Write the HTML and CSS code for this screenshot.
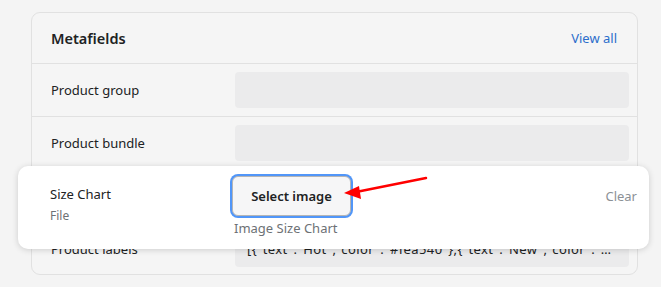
FILE: index.html
```html
<!DOCTYPE html>
<html lang="en">
<head>
    <meta charset="UTF-8">
    <title>Metafields</title>
    <link rel="stylesheet" href="styles.css">
</head>
<body>
    <main class="page">
        <section class="card">
            <header class="card-head">
                <h2>Metafields</h2>
                <a class="link" href="#">View all</a>
            </header>
            <div class="row">
                <span class="label">Product group</span>
                <div class="field"></div>
            </div>
            <div class="row">
                <span class="label">Product bundle</span>
                <div class="field"></div>
            </div>
            <!-- covered by the popup below -->
            <div class="row">
                <span class="label"></span>
                <div class="field"></div>
            </div>
            <div class="row last">
                <span class="label">Product labels</span>
                <div class="field">[{"text":"Hot","color":"#fea540"},{"text":"New","color":"#2c6ecb"}]</div>
            </div>
        </section>

        <!-- popup row over the card -->
        <div class="popup">
            <div class="popup-label">
                <span class="name">Size Chart</span>
                <span class="type">File</span>
            </div>
            <div class="popup-value">
                <button class="select">Select image</button>
                <span class="hint">Image Size Chart</span>
            </div>
            <a class="clear" href="#">Clear</a>
        </div>

        <svg class="arrow" width="100" height="30" viewBox="0 0 100 30">
            <line x1="86" y1="2" x2="16" y2="16" stroke="#f00" stroke-width="2.5" stroke-linecap="round"/>
            <polygon points="4,17 19,10 21,23" fill="#f00"/>
        </svg>
    </main>
</body>
</html>
```

FILE: styles.css
```css
* {
    margin: 0;
    padding: 0;
    box-sizing: border-box;
}

body {
    font-family: 'Noto Sans', 'Open Sans', sans-serif;
    font-size: 13px;
    color: #202223;
    background-color: #f4f4f4;
}

.page {
    position: relative;
    width: 661px;
    height: 287px;
    padding: 12px 23px 0 31px;
}

.card {
    border: 1px solid #e1e1e1;
    border-radius: 9px;
    background-color: #f5f5f5;
}

.card-head {
    display: flex;
    justify-content: space-between;
    align-items: center;
    height: 51px;
    padding: 0 20px 0 19px;
    border-bottom: 1px solid #e1e1e1;
}

.card-head h2 {
    font-size: 14.5px;
    font-weight: 600;
}

.link {
    color: #2c6ecb;
    text-decoration: none;
}

.row {
    display: grid;
    grid-template-columns: 184px 1fr;
    align-items: center;
    height: 53px;
    padding: 8px 8px 8px 19px;
    border-bottom: 1px solid #e1e1e1;
}

.row.last {
    border-bottom: none;
    height: 51px;
}

.field {
    height: 36px;
    border-radius: 4px;
    background-color: #ebebec;
    padding: 0 16px 0 12px;
    line-height: 36px;
    letter-spacing: 0.4px;
    white-space: nowrap;
    overflow: hidden;
    text-overflow: ellipsis;
}

.popup {
    position: absolute;
    left: 18px;
    top: 166px;
    width: 631px;
    height: 83px;
    display: flex;
    align-items: flex-start;
    padding: 10px 12px 0 32px;
    background-color: #fff;
    border-radius: 10px;
    box-shadow: 0 1px 6px rgba(0, 0, 0, 0.16);
}

.popup-label {
    display: flex;
    flex-direction: column;
    width: 182px;
    padding-top: 9px;
}

.popup-label .type {
    font-size: 12px;
    color: #6d7175;
    margin-top: 4px;
}

.popup-value {
    display: flex;
    flex-direction: column;
    align-items: flex-start;
    flex: 1;
}

.select {
    font-family: inherit;
    font-size: 13px;
    font-weight: 600;
    color: #202223;
    width: 119px;
    height: 40px;
    border: 1px solid #b5b5b5;
    border-radius: 6px;
    background-color: #f6f6f7;
    box-shadow: 0 0 0 2px #5196f8;
    outline: none;
}

.hint {
    color: #6d7175;
    margin: 3px 0 0 2px;
}

.clear {
    color: #8c9196;
    text-decoration: none;
    margin-top: 11px;
}

.arrow {
    position: absolute;
    left: 340px;
    top: 176px;
}
```
